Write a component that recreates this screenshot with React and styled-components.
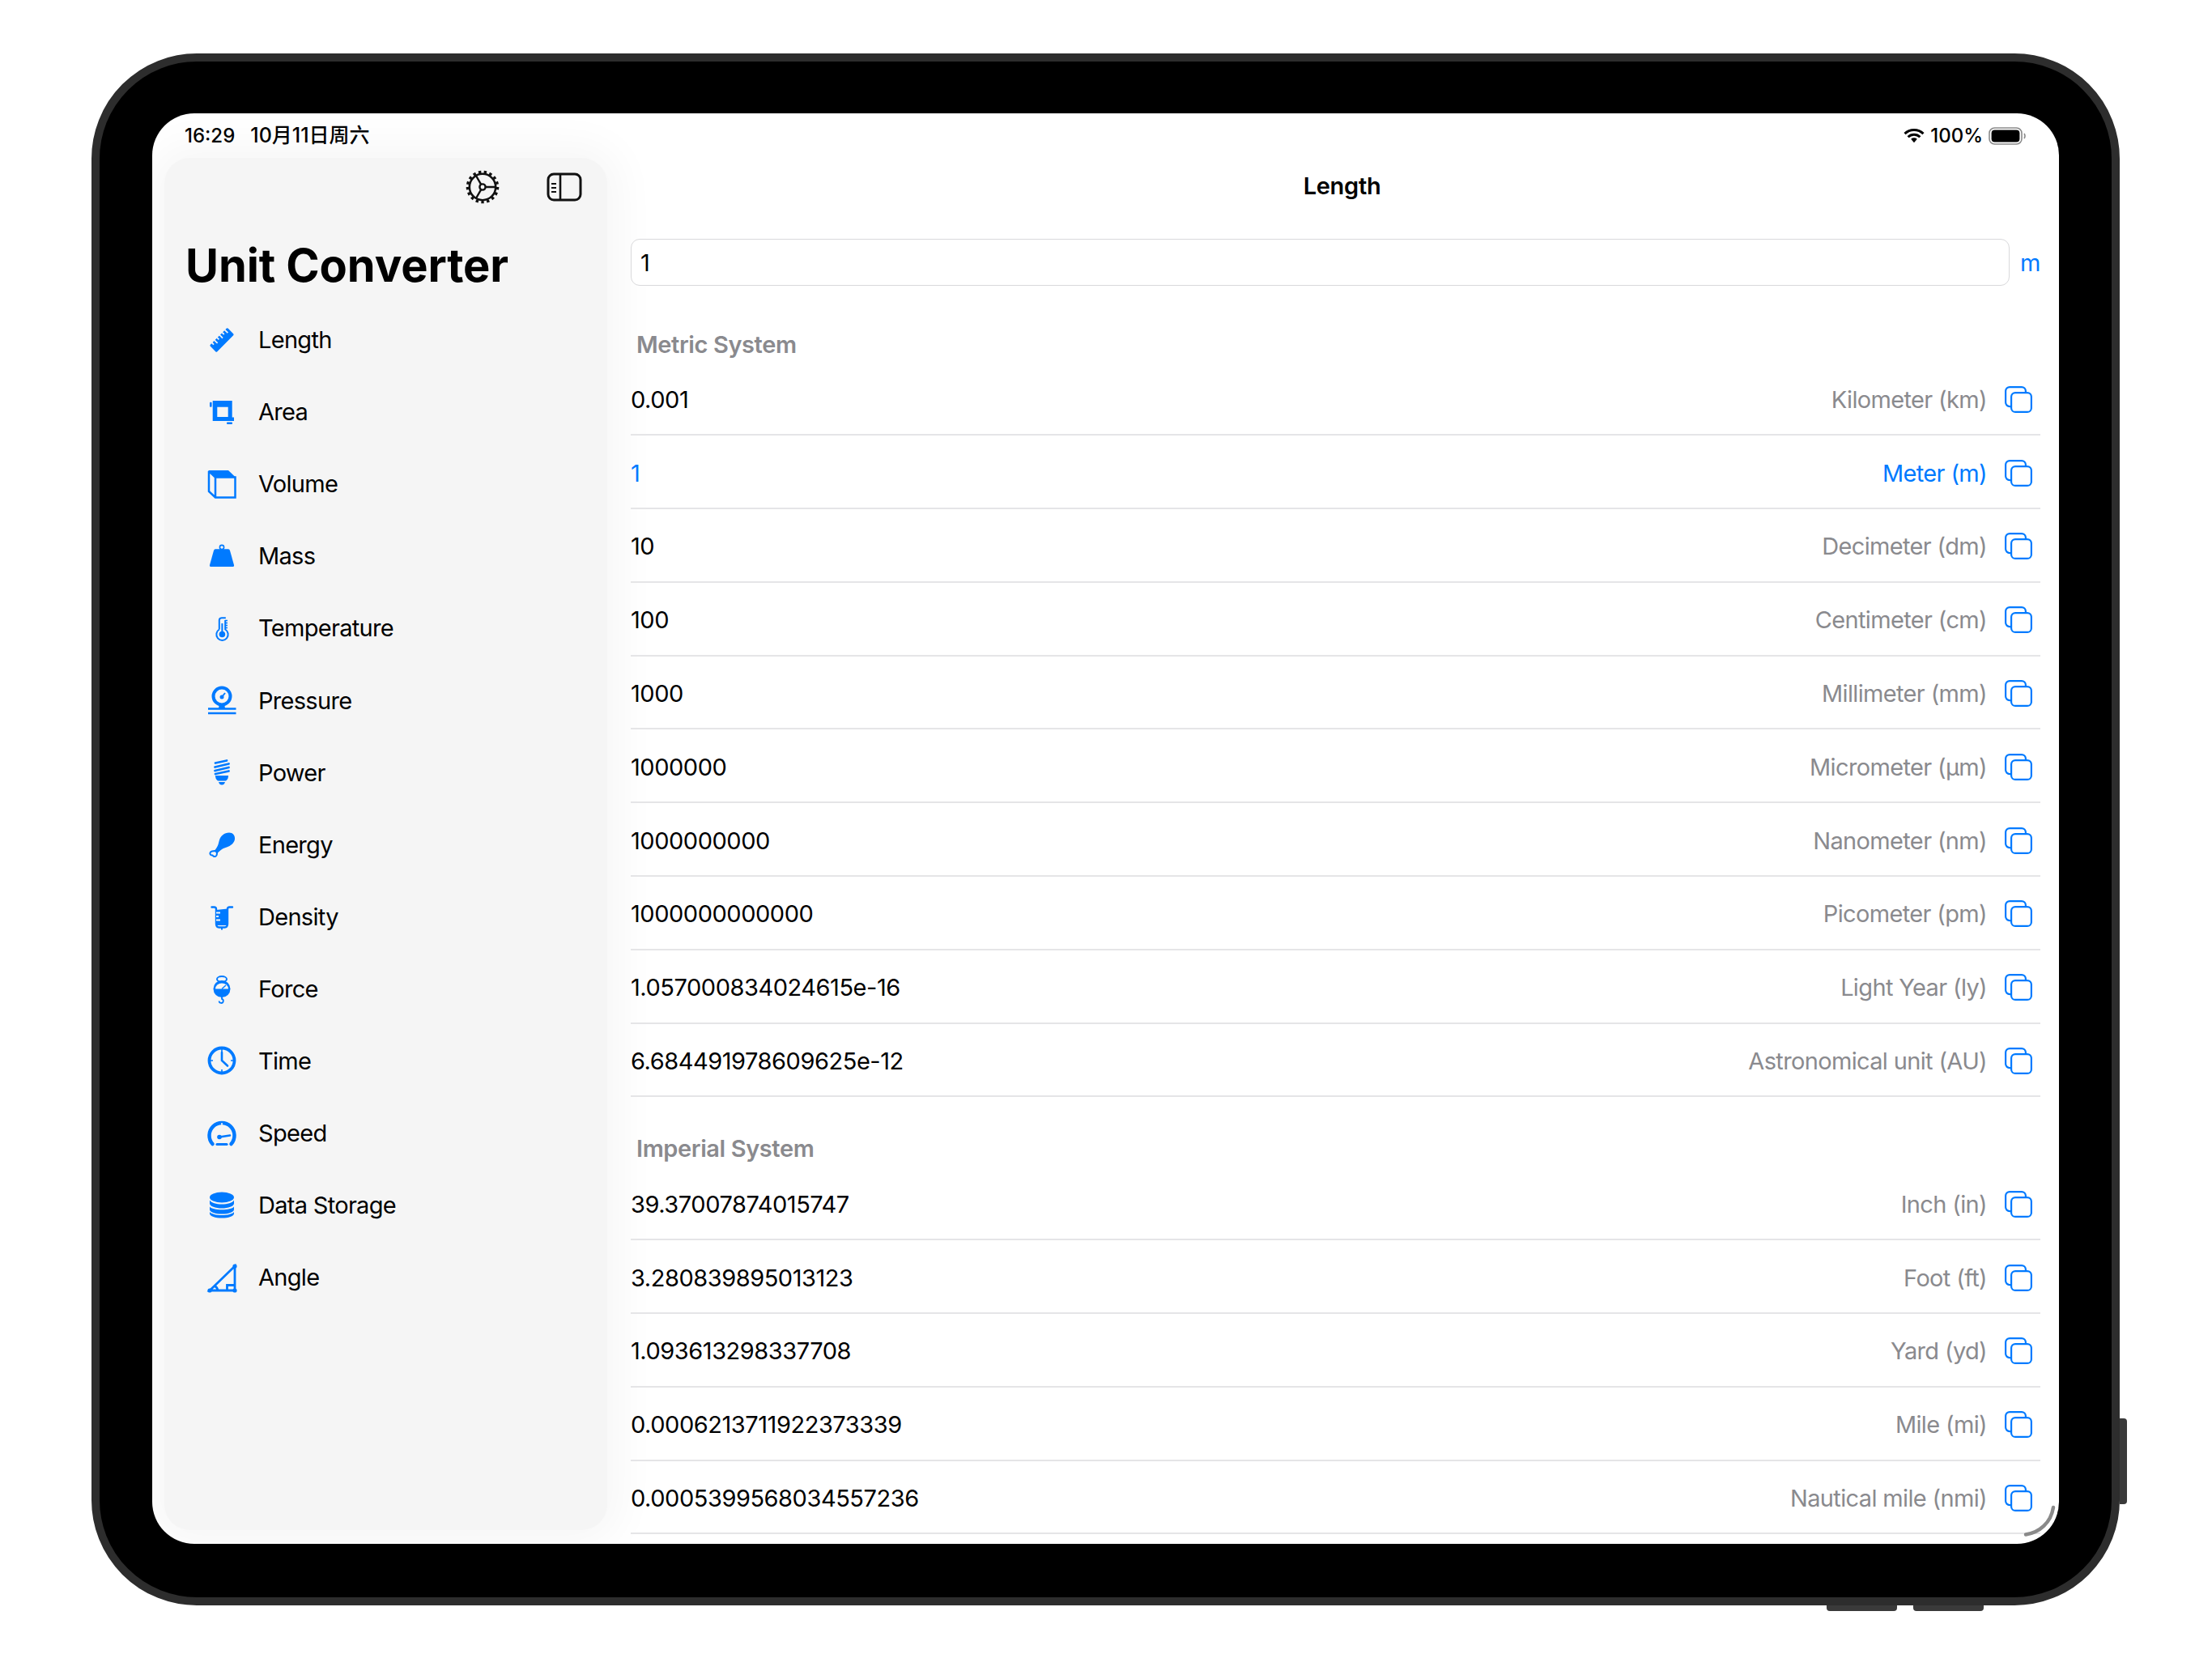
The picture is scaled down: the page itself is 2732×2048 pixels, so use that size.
import React from 'react'
import styled, { createGlobalStyle } from 'styled-components'

const BLUE = '#007aff'
const BG = '#f5f5f5'

const Global = createGlobalStyle`
  html, body { margin: 0; padding: 0; background: #fff; }
  body { font-family: Inter, "Noto Sans CJK SC", sans-serif; color: #000; }
  * { box-sizing: border-box; }
`

const Glyph = ({ children }) => (
  <svg width="36" height="36" viewBox="0 0 36 36" fill={BLUE} style={{ overflow: 'visible' }}>
    {children}
  </svg>
)

const icons = {
  length: (
    <Glyph>
      <g transform="rotate(-45 18 18)">
        <rect x="2.5" y="12" width="31" height="12" rx="1.5" />
        {[6, 10.5, 15, 19.5, 24, 28.5].map((x, i) => (
          <rect key={x} x={x} y="11.5" width="1.8" height={i % 2 ? 5.5 : 3.5} fill={BG} />
        ))}
      </g>
    </Glyph>
  ),
  area: (
    <Glyph>
      <path fillRule="evenodd" d="M6.7 4H30.7V24.5H33V29H6.7ZM12.3 11.7V24H25.7V11.7Z" />
      <rect x="3" y="5.7" width="2.6" height="6" rx="1" />
      <rect x="24" y="30.4" width="7" height="2.6" rx="1" />
    </Glyph>
  ),
  volume: (
    <Glyph>
      <path d="M1 1H26L35.5 10H9.5Z" />
      <path d="M2 2V27L10 34.5H34.5V9.5H10V34M2 2L10 9.5" fill="none" stroke={BLUE} strokeWidth="2.5" />
    </Glyph>
  ),
  mass: (
    <Glyph>
      <circle cx="18" cy="7" r="2.6" fill="none" stroke={BLUE} strokeWidth="1.6" />
      <path d="M10 9.3H26Q27.5 9.3 28 11L33 29Q33.5 31 31 31H5Q2.5 31 3 29L8 11Q8.5 9.3 10 9.3Z" />
    </Glyph>
  ),
  temperature: (
    <Glyph>
      <path
        d="M14.8 19.5V8a3 3 0 0 1 3-2.8h5M22.2 8V19.5A7.2 7.2 0 1 1 14.8 19.5"
        fill="none"
        stroke={BLUE}
        strokeWidth="2"
      />
      <circle cx="18.4" cy="25.5" r="3.8" />
      <rect x="17.4" y="12" width="2" height="12" />
      <path d="M22 8.5h3M22 11.5h3M22 14.5h3M22 17.5h3" stroke={BLUE} strokeWidth="1.4" />
    </Glyph>
  ),
  pressure: (
    <Glyph>
      <circle cx="18" cy="13" r="10.5" fill="none" stroke={BLUE} strokeWidth="4" />
      <path d="M18 14L22 9" stroke={BLUE} strokeWidth="2" />
      <circle cx="18" cy="14" r="2.5" />
      <path d="M15 22H21L22 28H14Z" />
      <path d="M1 28.5H35.5M1 34H35.5" stroke={BLUE} strokeWidth="2.5" />
    </Glyph>
  ),
  power: (
    <Glyph>
      <path
        d="M10 6.5L24 3.5M9.5 11.5L26.5 7.5M9.5 16L26.5 12M10 20L26.5 16.5"
        stroke={BLUE}
        strokeWidth="2.8"
        strokeLinecap="round"
      />
      <path d="M10 22H26Q26 26.5 23 28.5H13Q10 26.5 10 22Z" />
      <path d="M14 30H22Q21 33.5 18 33.5Q15 33.5 14 30Z" />
    </Glyph>
  ),
  energy: (
    <Glyph>
      <path d="M27 3.5C31.5 3.5 34.5 7 34 11.5C33.5 16 29 20 24 21.5C20 22.5 17.5 24 12 29.5L8.5 26C14 20 13.5 17 15 12.5C16.5 7.5 21 3.5 27 3.5Z" />
      <path
        d="M10 26L12 28.5C12 31 11 33.5 9 33C7.5 33 7 32 6.5 31.5C4.5 31.5 3 30.5 3.5 28.5C4 26.8 7.5 26 10 26Z"
        fill={BG}
        stroke={BLUE}
        strokeWidth="2"
      />
    </Glyph>
  ),
  density: (
    <Glyph>
      <path
        d="M5.5 6.5H8.5Q11 6.5 11 9V27Q11 31.5 14.5 31.5H21.5Q25 31.5 25 27V9Q25 6.5 27.5 6.5H31"
        fill="none"
        stroke={BLUE}
        strokeWidth="2.4"
        strokeLinecap="round"
      />
      <path d="M11 10L25 8.5V29H11Z" />
      <path d="M11 13.5H16M11 18H14M11 22.5H16" stroke={BG} strokeWidth="1.8" />
      <rect x="17" y="31" width="2" height="3.5" />
    </Glyph>
  ),
  force: (
    <Glyph>
      <ellipse cx="18" cy="6.5" rx="6" ry="3.4" fill="none" stroke={BLUE} strokeWidth="2" />
      <circle cx="18" cy="18.5" r="10.5" />
      <path d="M10 18.5a8 7 0 0 1 16 0z" fill={BG} />
      <path d="M18 18.5L23 14" stroke={BLUE} strokeWidth="1.4" />
      <path d="M18 28v3.5a2.6 2.6 0 1 1-3.4 2.6" fill="none" stroke={BLUE} strokeWidth="1.8" transform="translate(0 -.6)" />
    </Glyph>
  ),
  time: (
    <Glyph>
      <circle cx="18" cy="18" r="15.5" fill="none" stroke={BLUE} strokeWidth="3.8" />
      <path d="M18 8V18L25 24.5" fill="none" stroke={BLUE} strokeWidth="2.6" strokeLinecap="round" />
      <path d="M18 4V7M18 29V32M4 18H7M29 18H32" stroke={BLUE} strokeWidth="1.6" />
    </Glyph>
  ),
  speed: (
    <Glyph>
      <path d="M6.5 31A15.5 15.5 0 1 1 29.5 31" fill="none" stroke={BLUE} strokeWidth="4.5" strokeLinecap="round" />
      <path d="M18 5V9" stroke={BG} strokeWidth="1.6" />
      <path d="M15 22.5L28 20.5" stroke={BLUE} strokeWidth="2.6" strokeLinecap="round" />
      <circle cx="15" cy="22.5" r="2.8" />
      <path d="M12 31.5H24" stroke={BLUE} strokeWidth="3.2" strokeLinecap="round" />
    </Glyph>
  ),
  data: (
    <Glyph>
      <ellipse cx="18" cy="8" rx="15" ry="6.5" />
      <path d="M3 11.5C5 15 11 16.5 18 16.5C25 16.5 31 15 33 11.5V15.5C33 19 26 21.5 18 21.5C10 21.5 3 19 3 15.5Z" />
      <path d="M3 19.5C5 22 11 23.3 18 23.3C25 23.3 31 22 33 19.5V23C33 26.5 26 28.5 18 28.5C10 28.5 3 26.5 3 23Z" />
      <path d="M3 26C5 28.5 11 30 18 30C25 30 31 28.5 33 26V28C33 31.5 26 33.5 18 33.5C10 33.5 3 31.5 3 28Z" />
    </Glyph>
  ),
  angle: (
    <Glyph>
      <path d="M3 34H34V4ZM24.5 34V27.5H34M9 28.5Q12.5 30 13 34" fill="none" stroke={BLUE} strokeWidth="2.8" />
      <circle cx="3" cy="34" r="2.6" />
      <circle cx="34" cy="34" r="2.6" />
      <circle cx="34" cy="4" r="2.6" />
    </Glyph>
  ),
}

const navItems = [
  ['length', 'Length'],
  ['area', 'Area'],
  ['volume', 'Volume'],
  ['mass', 'Mass'],
  ['temperature', 'Temperature'],
  ['pressure', 'Pressure'],
  ['power', 'Power'],
  ['energy', 'Energy'],
  ['density', 'Density'],
  ['force', 'Force'],
  ['time', 'Time'],
  ['speed', 'Speed'],
  ['data', 'Data Storage'],
  ['angle', 'Angle'],
]

const metric = [
  ['0.001', 'Kilometer (km)'],
  ['1', 'Meter (m)', true],
  ['10', 'Decimeter (dm)'],
  ['100', 'Centimeter (cm)'],
  ['1000', 'Millimeter (mm)'],
  ['1000000', 'Micrometer (μm)'],
  ['1000000000', 'Nanometer (nm)'],
  ['1000000000000', 'Picometer (pm)'],
  ['1.057000834024615e-16', 'Light Year (ly)'],
  ['6.684491978609625e-12', 'Astronomical unit (AU)'],
]

const imperial = [
  ['39.37007874015747', 'Inch (in)'],
  ['3.280839895013123', 'Foot (ft)'],
  ['1.093613298337708', 'Yard (yd)'],
  ['0.0006213711922373339', 'Mile (mi)'],
  ['0.0005399568034557236', 'Nautical mile (nmi)'],
]

const GearIcon = () => (
  <svg width="42" height="42" viewBox="0 0 42 42" fill="none" stroke="#111">
    <circle cx="21" cy="21" r="16.2" strokeWidth="2.6" />
    <circle cx="21" cy="21" r="18.6" strokeWidth="3.4" strokeDasharray="3.4 3.43" />
    <circle cx="21" cy="21" r="3.6" strokeWidth="2.4" />
    <path d="M24.6 21H37M19.2 17.9L12.9 7M19.2 24.1L12.9 35" strokeWidth="2.4" />
  </svg>
)

const SidebarIcon = () => (
  <svg width="44" height="36" viewBox="0 0 44 36" fill="none" stroke="#111">
    <rect x="2" y="2" width="40" height="32" rx="7" strokeWidth="3" />
    <path d="M17 2V34" strokeWidth="2.6" />
    <path d="M6 14H12M6 19H12M6 24H12" strokeWidth="2" />
  </svg>
)

const CopyIcon = () => (
  <svg width="34" height="33" viewBox="0 0 34 33" fill="none" stroke={BLUE} strokeWidth="2.2">
    <rect x="1.1" y="1.1" width="24.8" height="24" rx="5" />
    <rect x="8.1" y="8.1" width="24.8" height="23.8" rx="5" fill="#fff" />
  </svg>
)

const Wifi = () => (
  <svg width="26" height="18" viewBox="0 0 26 18" fill="none" stroke="#000" strokeWidth="3">
    <path d="M1.5 6.2A16.5 16.5 0 0 1 24.5 6.2" />
    <path d="M5.6 10.2A10.6 10.6 0 0 1 20.4 10.2" />
    <path d="M9.2 12.8L13 17.2L16.8 12.8A5.6 5.6 0 0 0 9.2 12.8Z" fill="#000" strokeWidth="0" />
  </svg>
)

const Battery = () => (
  <svg width="46" height="22" viewBox="0 0 46 22" fill="none">
    <rect x="1" y="1" width="40" height="20" rx="6.5" stroke="#8a8a8a" strokeWidth="1.6" />
    <rect x="3.6" y="3.6" width="34.8" height="14.8" rx="4" fill="#000" />
    <path d="M44 8Q46 11 44 14" stroke="#8a8a8a" strokeWidth="1.6" />
  </svg>
)

const App = () => {
  const renderRows = (rows) =>
    rows.map(([value, label, active]) => (
      <Row key={label}>
        <Value $active={active}>{value}</Value>
        <Unit $active={active}>{label}</Unit>
        <CopyIcon />
      </Row>
    ))

  return (
    <Page>
      <Global />
      <Device>
        <PowerKey />
        <VolumeKeys>
          <VolumeKey />
          <VolumeKey />
        </VolumeKeys>
        <Screen>
          <StatusBar>
            <StatusTime>
              <span>16:29</span>
              <StatusDate>10月11日周六</StatusDate>
            </StatusTime>
            <StatusRight>
              <Wifi />
              <span>100%</span>
              <Battery />
            </StatusRight>
          </StatusBar>
          <Body>
            <Sidebar>
              <SideTools>
                <GearIcon />
                <SidebarIcon />
              </SideTools>
              <AppTitle>Unit Converter</AppTitle>
              <Nav>
                {navItems.map(([key, label]) => (
                  <NavRow key={key}>
                    {icons[key]}
                    <span>{label}</span>
                  </NavRow>
                ))}
              </Nav>
            </Sidebar>
            <Main>
              <TopBar>Length</TopBar>
              <InputRow>
                <ValueInput readOnly value="1" />
                <InputUnit>m</InputUnit>
              </InputRow>
              <SectionTitle>Metric System</SectionTitle>
              {renderRows(metric)}
              <SectionTitle $second>Imperial System</SectionTitle>
              {renderRows(imperial)}
            </Main>
          </Body>
          <CornerArc viewBox="0 0 40 40" fill="none">
            <path d="M3 36.5C20 34 34 22 37 3" stroke="#8a8a8a" strokeWidth="4.5" strokeLinecap="round" />
          </CornerArc>
        </Screen>
      </Device>
    </Page>
  )
}

export default App

const Page = styled.div`
  height: 2048px;
  padding: 66px 0 0 113px;
  background: #fff;
`

const Device = styled.div`
  position: relative;
  width: 2505px;
  height: 1917px;
  padding: 64px 65px 66px;
  background: #000;
  border: 10px solid #2d2d2d;
  border-radius: 130px;
`

const PowerKey = styled.div`
  position: absolute;
  top: 1676px;
  right: -19px;
  width: 9px;
  height: 106px;
  background: #3a3a3a;
  border-radius: 0 4px 4px 0;
`

const VolumeKeys = styled.div`
  position: absolute;
  top: 1907px;
  left: 2133px;
  display: flex;
  gap: 20px;
`

const VolumeKey = styled.div`
  width: 87px;
  height: 7px;
  background: #3a3a3a;
  border-radius: 0 0 4px 4px;
`

const Screen = styled.div`
  position: relative;
  display: flex;
  flex-direction: column;
  width: 100%;
  height: 100%;
  overflow: hidden;
  background: #fff;
  border-radius: 52px;
`

const StatusBar = styled.div`
  display: flex;
  justify-content: space-between;
  align-items: center;
  height: 55px;
  flex: none;
  padding: 0 41px 0 40px;
  font-size: 24px;
  font-weight: 500;
`

const StatusTime = styled.div`
  display: flex;
  align-items: baseline;
  gap: 19px;
  padding-bottom: 5px;
`

const StatusDate = styled.span`
  font-size: 25px;
`

const StatusRight = styled.div`
  display: flex;
  align-items: center;
  gap: 7px;
`

const Body = styled.div`
  display: flex;
  flex: 1;
  min-height: 0;
`

const Sidebar = styled.aside`
  flex: none;
  width: 547px;
  margin: 0 0 17px 15px;
  background: ${BG};
  border-radius: 32px;
  box-shadow: 0 0 50px 18px rgba(0, 0, 0, 0.035);
`

const SideTools = styled.div`
  display: flex;
  justify-content: flex-end;
  align-items: center;
  gap: 58px;
  padding: 15px 31px 0 0;
`

const AppTitle = styled.h1`
  margin: 42px 0 13px 26px;
  font-size: 56px;
  line-height: 68px;
  font-weight: 700;
  letter-spacing: -0.1px;
`

const Nav = styled.nav`
  display: flex;
  flex-direction: column;
`

const NavRow = styled.div`
  display: flex;
  align-items: center;
  gap: 27px;
  height: 89.1px;
  padding-left: 53px;
  font-size: 29px;
  letter-spacing: -0.7px;
`

const Main = styled.main`
  flex: 1;
  min-width: 0;
  padding: 0 23px 0 29px;
`

const TopBar = styled.div`
  height: 70px;
  line-height: 70px;
  padding-left: 16px;
  text-align: center;
  font-size: 29px;
  font-weight: 600;
  letter-spacing: -0.3px;
`

const InputRow = styled.div`
  display: flex;
  align-items: center;
  gap: 13px;
  margin-top: 30px;
`

const ValueInput = styled.input`
  flex: 1;
  height: 58px;
  padding: 0 11px;
  font: 400 29px Inter, sans-serif;
  color: #000;
  background: #fff;
  border: 1.5px solid #d9d9db;
  border-radius: 11px;
  outline: none;
`

const InputUnit = styled.span`
  width: 25px;
  font-size: 29px;
  color: ${BLUE};
`

const SectionTitle = styled.div`
  height: 42px;
  margin-top: ${(p) => (p.$second ? '44px' : '52.5px')};
  padding-left: 7px;
  font-size: 29px;
  line-height: 40px;
  font-weight: 600;
  letter-spacing: -0.4px;
  color: #8a8a8e;
`

const Row = styled.div`
  display: flex;
  align-items: center;
  height: 90.8px;
  padding: 3px 10px 0 0;
  border-bottom: 2px solid #e5e5e7;
`

const Value = styled.span`
  flex: 1;
  font-size: 29px;
  letter-spacing: -0.46px;
  color: ${(p) => (p.$active ? BLUE : '#000')};
`

const Unit = styled.span`
  margin-right: 22px;
  font-size: 29px;
  letter-spacing: -0.65px;
  color: ${(p) => (p.$active ? BLUE : '#8a8a8e')};
`

const CornerArc = styled.svg`
  position: absolute;
  right: 4px;
  bottom: 8px;
  width: 40px;
  height: 40px;
`
